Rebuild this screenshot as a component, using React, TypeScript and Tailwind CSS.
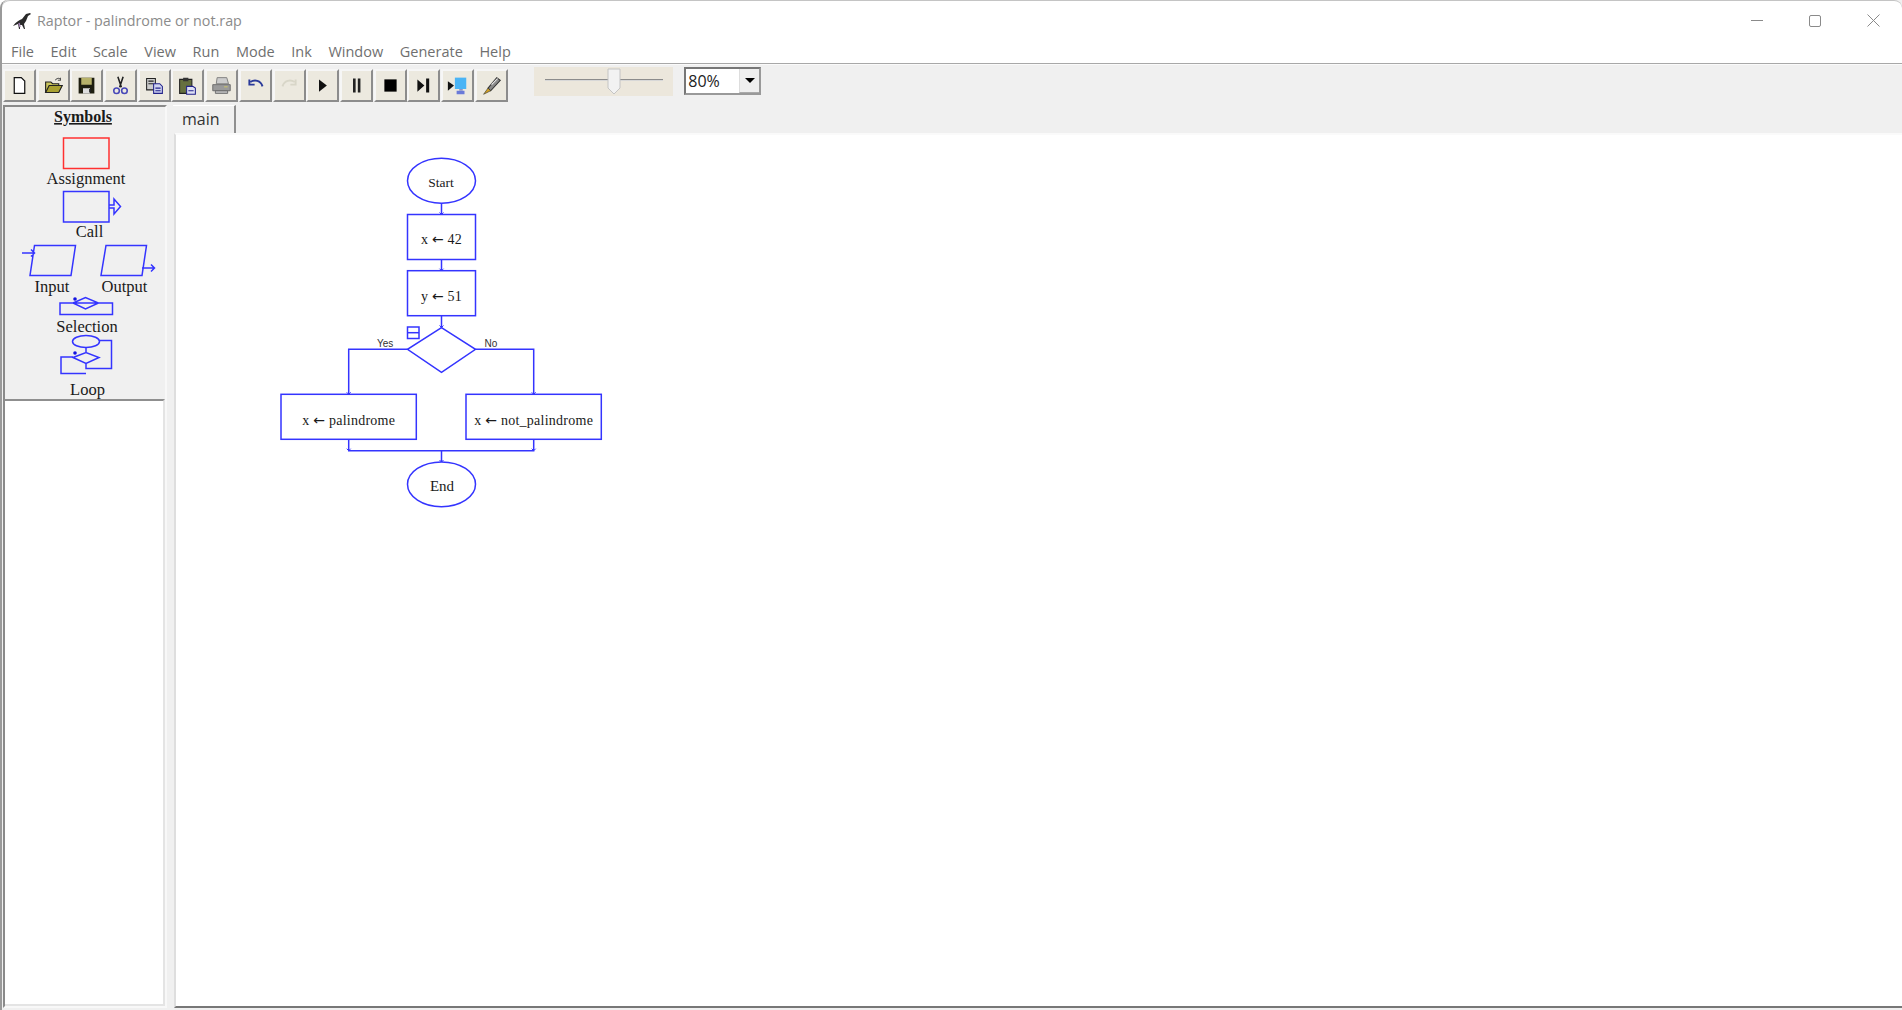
import type { ReactNode } from "react";

const BLUE = "#3434ff";

// toolbar glyphs, all on a 24x24 box
const icons: ReactNode[] = [
  <path key="new" d="M6 3h8l4 4v14H6z" fill="#fff" stroke="#111" strokeWidth="1.4" />,
  <g key="open">
    <path d="M3 20V8h6l2 2h7v3" fill="#c9c45c" stroke="#222" strokeWidth="1.3" />
    <path d="M3 20l4-8h15l-4 8z" fill="#a8a030" stroke="#222" strokeWidth="1.3" />
    <path d="M14 6c2-3 5-3 6-1M20 3v3h-3" fill="none" stroke="#555" strokeWidth="1.2" />
  </g>,
  <g key="save">
    <path d="M3 3h18v18H3z" fill="#1e1e10" />
    <path d="M6 3h12v8H6z" fill="#b7b26a" />
    <path d="M8 15h8v6H8z" fill="#ddd" />
    <path d="M15 16h2v4h-2z" fill="#222" />
  </g>,
  <g key="cut" fill="none" strokeWidth="1.8">
    <path d="M9 2l4 12M15 2l-4 12" stroke="#222" />
    <circle cx="7.5" cy="18" r="3.2" stroke="#4848b8" />
    <circle cx="16.5" cy="18" r="3.2" stroke="#4848b8" />
  </g>,
  <g key="copy" strokeWidth="1.2">
    <path d="M3 4h10v13H3z" fill="#ccc" stroke="#222" />
    <path d="M5 7h6M5 10h6" stroke="#222" />
    <path d="M11 10h7l3 3v8H11z" fill="#cfd3f0" stroke="#22228a" />
    <path d="M13 15h6M13 18h6" stroke="#22228a" />
  </g>,
  <g key="paste" strokeWidth="1.2">
    <path d="M3 5h14v16H3z" fill="#66703f" stroke="#222" />
    <path d="M7 3h6v4H7z" fill="#333" />
    <path d="M11 13h7l3 2v7H11z" fill="#dfe1f5" stroke="#22228a" />
    <path d="M13 18h6" stroke="#22228a" />
  </g>,
  <g key="print" strokeWidth="1">
    <path d="M7 3h11l2 7H6z" fill="#ccc" stroke="#777" />
    <path d="M2 11h20v7H2z" fill="#9a9a9a" stroke="#666" />
    <path d="M5 18h14v3H5z" fill="#bbb" stroke="#666" />
    <path d="M15 13h4v1h-4z" fill="#dcd45a" />
  </g>,
  <g key="undo" fill="none" stroke="#2a3a9a" strokeWidth="2.2">
    <path d="M6 8c5-3 12-2 14 5" />
    <path d="M5 5v6h6" />
  </g>,
  <g key="redo" fill="none" stroke="#d8d6c8" strokeWidth="2.2">
    <path d="M18 8c-5-3-12-2-14 5" />
    <path d="M19 5v6h-6" />
  </g>,
  <path key="play" d="M8 5l9 7-9 7z" fill="#111" />,
  <path key="pause" d="M8 4h3v16H8zM13.500 4h3v16h-3z" fill="#222" />,
  <path key="stop" d="M5 5h14v14H5z" fill="#000" />,
  <path key="step" d="M5 5l8 7-8 7zM15 4h3.500v16H15z" fill="#111" />,
  <g key="monitor">
    <path d="M1 7l7 5-7 6z" fill="#111" />
    <path d="M9 3h13v13H9z" fill="#4ab4f5" />
    <path d="M11 18h9v4h-9z" fill="#6a7ad8" />
    <path d="M14 16h4v2h-4z" fill="#8a94c8" />
  </g>,
  <g key="pen">
    <path d="M8 15L18 3l4 3-11 12z" fill="#8a8a8a" stroke="#333" strokeWidth="1.2" />
    <path d="M12 11l7-7" stroke="#eee" strokeWidth="1.200" />
    <path d="M8 15l3 3-8 4z" fill="#d4a020" stroke="#443" strokeWidth=".8" />
  </g>,
];

const menus = ["File", "Edit", "Scale", "View", "Run", "Mode", "Ink", "Window", "Generate", "Help"];

function ToolButton({ children }: { children: ReactNode }) {
  return (
    <div className="w-[33px] h-[33px] mr-[0.7px] shrink-0 flex items-center justify-center bg-[#ece9df] border-2 border-t-[#f6f6f6] border-l-[#f6f6f6] border-r-[#8c8c8c] border-b-[#8c8c8c]">
      <svg width="21" height="21" viewBox="0 0 24 24">{children}</svg>
    </div>
  );
}

function Palette() {
  return (
    <svg width="158" height="292" viewBox="5 107 158 292" className="block" fontFamily="'Liberation Serif', serif" fill="#1a1a1a">
      <text x="83" y="122" textAnchor="middle" fontSize="16" fontWeight="700" textDecoration="underline">Symbols</text>
      <g fill="none" strokeWidth="1.5" stroke={BLUE}>
        <rect x="63.500" y="138" width="45.500" height="30.500" stroke="#ff3030" />
        <rect x="63.500" y="191.500" width="45.500" height="30.500" />
        <path d="M109 205h5v-6l6.500 7.500-6.500 7.500v-6h-5" />
        <path d="M34.500 245.500h41l-4.500 30H30zM22 253h12M31 249.500l3.500 3.500-3.500 3.500" />
        <path d="M106 245.500h40.500l-4.500 30h-41zM142 268h12M151 264.500l3.500 3.500-3.500 3.500" />
        <path d="M60 303h52.500v11.500H60zM73 303l12.500-5.500L98.500 303l-13 6z" fill="#f0f0f0" />
        <ellipse cx="86" cy="341.500" rx="13.500" ry="6" />
        <path d="M86 347.500v5M73 357.500l13-5 13 5-13 6zM86 363.500v5h25.500v-28H99.500M73 357h-12v16.500h25" />
      </g>
      <circle cx="75" cy="299" r="1.800" fill="#1414e0" />
      <circle cx="75" cy="353" r="1.800" fill="#1414e0" />
      <g fontSize="16.500" textAnchor="middle">
        <text x="86" y="184">Assignment</text>
        <text x="89.500" y="237">Call</text>
        <text x="52" y="292">Input</text>
        <text x="124.500" y="292">Output</text>
        <text x="87" y="332">Selection</text>
        <text x="87.500" y="395">Loop</text>
      </g>
    </svg>
  );
}

function Arrow() {
  return <tspan fontFamily="'DejaVu Sans', sans-serif">←</tspan>;
}

function Flowchart() {
  return (
    <svg width="460" height="400" viewBox="176 135 460 400" className="block" fontFamily="'Liberation Serif', serif" fill="#1a1a1a">
      <g fill="none" stroke={BLUE} strokeWidth="1.500">
        <ellipse cx="441.500" cy="180.700" rx="34" ry="22.500" />
        <rect x="407.500" y="214.500" width="68" height="45" />
        <rect x="407.500" y="270.700" width="68" height="45" />
        <path d="M441.500 327.700l34 21.600-34 23-34-23z" />
        <path d="M407.500 349.300h-58.800v45M475.500 349.300h58.200v45" />
        <rect x="281" y="394.300" width="135.300" height="45" />
        <rect x="466" y="394.300" width="135.300" height="45" />
        <path d="M348.700 439.300v11.400h185v-11.400M441.500 450.700v11.300" />
        <ellipse cx="441.500" cy="484.300" rx="34" ry="22.400" />
        <path d="M441.500 203v11.500M441.500 259.500v11.200M441.500 315.700v12" />
        <g strokeWidth="1">
          <path d="M439.500 212.500l2 2 2-2M439.500 268.700l2 2 2-2M439.500 325.500l2 2 2-2M346.700 392.300l2 2 2-2M531.700 392.300l2 2 2-2M439.500 460l2 2 2-2M346.700 448.700l2 2 2-2M531.700 448.700l2 2 2-2" />
        </g>
        <rect x="407.500" y="327" width="11.500" height="11.500" />
        <path d="M407.500 332.700h11.500" />
      </g>
      <g textAnchor="middle" fontSize="14" letterSpacing=".25">
        <text x="441" y="187" fontSize="13.500" letterSpacing="0">Start</text>
        <text x="441.500" y="244">x <Arrow /> 42</text>
        <text x="441.500" y="301">y <Arrow /> 51</text>
        <text x="348.700" y="425">x <Arrow /> palindrome</text>
        <text x="533.700" y="425">x <Arrow /> not_palindrome</text>
        <text x="442" y="491" fontSize="15" letterSpacing="0">End</text>
      </g>
      <g fontFamily="'Liberation Sans', sans-serif" fontSize="10" fill="#333">
        <text x="377" y="347">Yes</text>
        <text x="484.500" y="347">No</text>
      </g>
    </svg>
  );
}

export default function App() {
  return (
    <div className="w-screen h-screen overflow-hidden flex flex-col bg-[#f0f0f0] font-['Open_Sans',sans-serif] border-l-2 border-l-[#9a9a9a] rounded-tl-lg">
      {/* title bar */}
      <div className="h-[40px] shrink-0 flex items-center bg-white border-t border-t-[#c4c4c4] pl-[10px] rounded-t-lg">
        <svg width="20" height="20" viewBox="0 0 20 20" className="mr-[5px]">
          <path d="M1 15C4 11 7 9 10 8l4-5 4-1 1 1-3 2-2 5-2 3 1 5h-1l-2-4-2 0 0 4-1 0-1-5z" fill="#2a2a2a" />
          <path d="M7 12l1 4" stroke="#a080b0" strokeWidth="1.500" />
        </svg>
        <span className="text-[14.300px] text-[#8b8b8b]">Raptor - palindrome or not.rap</span>
        <div className="ml-auto flex items-center">
          <div className="w-[12px] h-px bg-[#8a8a8a] mr-[46px]" />
          <div className="w-[12px] h-[12px] border border-[#8a8a8a] rounded-[2px] mr-[46px]" />
          <svg width="13" height="13" viewBox="0 0 13 13" className="mr-[22px]">
            <path d="M.5.500l12 12M12.500.500l-12 12" stroke="#8a8a8a" fill="none" />
          </svg>
        </div>
      </div>

      {/* menu bar */}
      <div className="h-[24px] shrink-0 flex items-center gap-[16.600px] bg-white pl-[9px] text-[14.500px] text-[#6f6f6f] border-b border-b-[#a8a8a8]">
        {menus.map((m) => (
          <span key={m}>{m}</span>
        ))}
      </div>

      {/* toolbar */}
      <div className="h-[41px] shrink-0 flex items-start pt-[4px] pl-[1px] border-t border-t-[#fafafa]">
        {icons.map((icon, i) => (
          <ToolButton key={i}>{icon}</ToolButton>
        ))}
        <div className="relative w-[139px] h-[29px] ml-[26px] -mt-[2px] bg-[#ece7dc] flex items-center justify-center">
          <div className="w-[118px] h-[2px] bg-[#8c8c8c] border-b border-b-[#d8d8d8] -mt-[3px]" />
          <svg width="14" height="28" viewBox="0 0 14 28" className="absolute left-[73px] top-0">
            <path d="M1 2h12v19l-6 6-6-6z" fill="#f2f2f2" stroke="#c4c4c4" />
          </svg>
        </div>
        <div className="w-[77px] h-[28px] ml-[11px] -mt-[2px] flex bg-white border-2 border-t-[#777] border-l-[#777] border-r-[#999] border-b-[#999]">
          <span className="flex-1 text-[16px] leading-[24px] pl-[2px] text-[#222]">80%</span>
          <div className="w-[20px] flex items-center justify-center bg-[#efefef] border-l border-l-[#ddd] border-b border-b-[#aaa]">
            <div className="w-0 h-0 border-x-[5px] border-x-transparent border-t-[5px] border-t-black" />
          </div>
        </div>
      </div>

      {/* main area */}
      <div className="flex-1 min-h-0 flex pl-px pb-[2px]">
        <div className="w-[164px] shrink-0 flex flex-col border-2 border-t-[#8a8a8a] border-l-[#8a8a8a] border-r-[#f8f8f8] border-b-[#f8f8f8]">
          <div className="h-[292px] shrink-0">
            <Palette />
          </div>
          <div className="flex-1 bg-white border-t-2 border-t-[#8f8f8f] border-r-2 border-r-[#e4e4e4] border-b-2 border-b-[#e4e4e4]" />
        </div>
        <div className="w-[6px] shrink-0" />
        <div className="flex-1 min-w-0 flex flex-col">
          <div className="h-[28px] shrink-0 flex">
            <div className="w-[63px] h-[28px] bg-[#f0f0f0] border-t border-t-white border-r-2 border-r-[#8f8f8f] text-[16px] leading-[26px] pl-[9px] text-[#333]">
              main
            </div>
          </div>
          <div className="flex-1 min-h-0 ml-px bg-white border-t-2 border-t-[#fafafa] border-l-2 border-l-[#dedede] border-b-2 border-b-[#777]">
            <Flowchart />
          </div>
        </div>
      </div>
    </div>
  );
}
